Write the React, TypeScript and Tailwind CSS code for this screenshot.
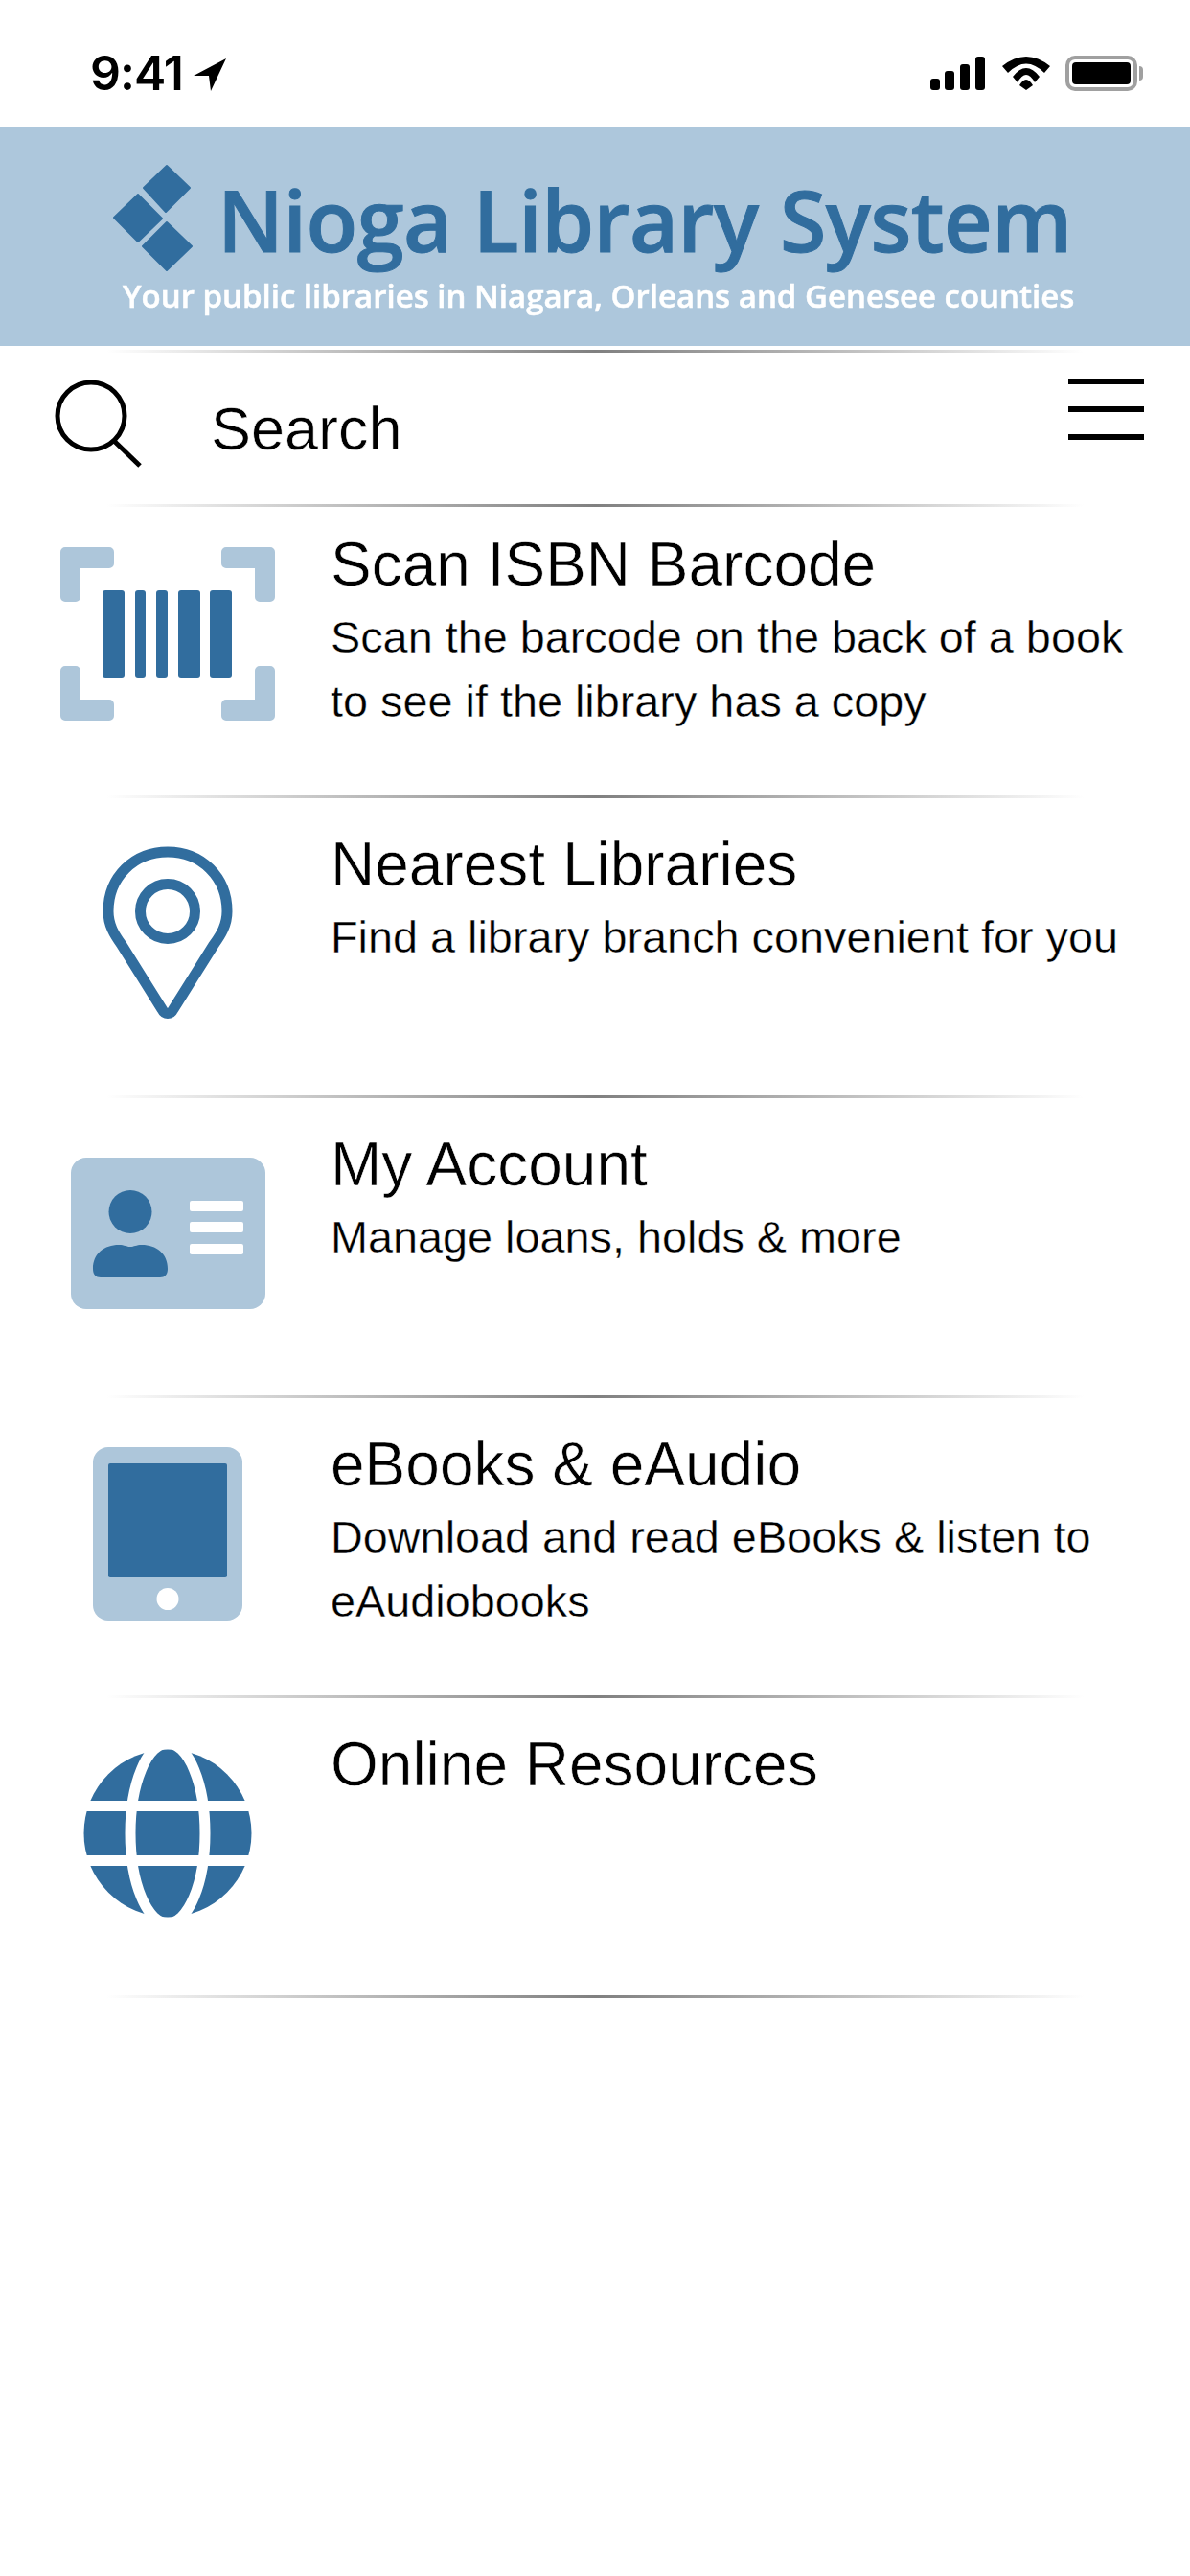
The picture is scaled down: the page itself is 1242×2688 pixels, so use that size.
const BLUE = '#316d9e'
const PALE = '#adc6da'

function Divider() {
  return <div className="mx-auto h-[3px] w-[1020px] bg-linear-to-r from-white via-[#808080] to-white" />
}

function StatusBar() {
  return (
    <div className="flex h-[132px] items-start justify-between pl-[94px] pr-[49px] pt-[49px]">
      <div className="flex items-center gap-[10px]">
        <span className="font-['Inter',sans-serif] text-[50px] font-semibold leading-[54px] tracking-[-1px] text-black">9:41</span>
        <svg width="36" height="36" viewBox="0 0 36 36" className="mt-[4px]">
          <path d="M35 1 L1 19 L17 19 L19 35 Z" fill="#000" />
        </svg>
      </div>
      <div className="flex items-center pt-[9px]">
        <svg width="57" height="35" viewBox="0 0 57 35">
          <rect x="0" y="23" width="10" height="12" rx="3" fill="#000" />
          <rect x="15" y="15" width="10" height="20" rx="3" fill="#000" />
          <rect x="31" y="8" width="10" height="27" rx="3" fill="#000" />
          <rect x="47" y="0" width="10" height="35" rx="3" fill="#000" />
        </svg>
        <svg width="50" height="35" viewBox="0 0 50 35" className="ml-[18px]">
          <path d="M0 10 Q25 -10 50 10 L44 17 Q25 -2 6 17 Z" fill="#000" />
          <path d="M11 21 Q25 3 39 21 L34 27 Q25 11 16 27 Z" fill="#000" />
          <path d="M18 30 Q25 18 32 30 L25 35 Z" fill="#000" />
        </svg>
        <div className="ml-[16px] flex items-center">
          <div className="flex h-[37px] w-[75px] items-center justify-center rounded-[10px] border-[4px] border-[#a0a0a0]">
            <div className="h-[23px] w-[61px] rounded-[4px] bg-black" />
          </div>
          <div className="ml-[2px] h-[15px] w-[4px] rounded-r-[4px] bg-[#a0a0a0]" />
        </div>
      </div>
    </div>
  )
}

function Banner() {
  return (
    <div className="flex h-[229px] flex-col bg-[#adc7dc] pl-[117px] pt-[39px]">
      <div className="flex items-start">
        <svg width="86" height="114" viewBox="117 171 86 114" className="shrink-0">
          <g fill={BLUE} stroke={BLUE} strokeWidth="2" strokeLinejoin="round">
            <path d="M174 173 L198 196 L173 221 L150 196 Z" />
            <path d="M144 203 L169 228 L144 252 L119 227 Z" />
            <path d="M174 232 L200 257 L174 282 L149 257 Z" />
          </g>
        </svg>
        <div className="ml-[24px] mt-[16px] whitespace-nowrap font-['Open_Sans',sans-serif] text-[88px] font-semibold leading-[84px] tracking-[-0.5px] text-[#316d9e] blur-[0.6px] [-webkit-text-stroke:1px_#316d9e]">
          Nioga Library System
        </div>
      </div>
      <div className="ml-[11px] mt-[2px] whitespace-nowrap font-['Open_Sans',sans-serif] text-[33px] font-semibold leading-[44px] text-white blur-[0.5px] [-webkit-text-stroke:0.5px_white]">
        Your public libraries in Niagara, Orleans and Genesee counties
      </div>
    </div>
  )
}

function SearchBar() {
  return (
    <div className="flex h-[158px] items-start pl-[57px] pr-[48px]">
      <svg width="92" height="92" viewBox="0 0 92 92" className="mt-[28px] shrink-0">
        <circle cx="38" cy="38" r="35" fill="none" stroke="#000" strokeWidth="5" />
        <path d="M62 64 L89 90" fill="none" stroke="#000" strokeWidth="5" />
      </svg>
      <span className="ml-[71px] mt-[42px] text-[63px] leading-[74px] text-black [-webkit-text-stroke:0.6px_white]">Search</span>
      <div className="ml-auto mt-[27px] flex w-[79px] flex-col gap-[23px]">
        <div className="h-[6px] bg-black" />
        <div className="h-[6px] bg-black" />
        <div className="h-[6px] bg-black" />
      </div>
    </div>
  )
}

function BarcodeIcon() {
  return (
    <svg width="224" height="181" viewBox="0 0 224 181">
      <path d="M5 0 H51 A5 5 0 0 1 56 5 V17 A5 5 0 0 1 51 22 H21 V52 A5 5 0 0 1 16 57 H5 A5 5 0 0 1 0 52 V5 A5 5 0 0 1 5 0 Z" fill={PALE} />
      <path d="M219 0 H173 A5 5 0 0 0 168 5 V17 A5 5 0 0 0 173 22 H203 V52 A5 5 0 0 0 208 57 H219 A5 5 0 0 0 224 52 V5 A5 5 0 0 0 219 0 Z" fill={PALE} />
      <path d="M5 181 H51 A5 5 0 0 0 56 176 V164 A5 5 0 0 0 51 159 H21 V129 A5 5 0 0 0 16 124 H5 A5 5 0 0 0 0 129 V176 A5 5 0 0 0 5 181 Z" fill={PALE} />
      <path d="M219 181 H173 A5 5 0 0 1 168 176 V164 A5 5 0 0 1 173 159 H203 V129 A5 5 0 0 1 208 124 H219 A5 5 0 0 1 224 129 V176 A5 5 0 0 1 219 181 Z" fill={PALE} />
      <rect x="44" y="45" width="23" height="91" rx="3" fill={BLUE} />
      <rect x="78" y="45" width="11" height="91" rx="3" fill={BLUE} />
      <rect x="100" y="45" width="12" height="91" rx="3" fill={BLUE} />
      <rect x="123" y="45" width="23" height="91" rx="3" fill={BLUE} />
      <rect x="156" y="45" width="23" height="91" rx="3" fill={BLUE} />
    </svg>
  )
}

function PinIcon() {
  return (
    <svg width="136" height="182" viewBox="0 0 136 182">
      <path d="M68 6 C33 6 6 32 6 68 C6 82 12 92 20 103 L62 170 C65 176 71 176 74 170 L116 103 C124 92 130 82 130 68 C130 32 103 6 68 6 Z" fill="none" stroke={BLUE} strokeWidth="11" strokeLinejoin="round" />
      <circle cx="68" cy="68" r="28.5" fill="none" stroke={BLUE} strokeWidth="11" />
    </svg>
  )
}

function CardIcon() {
  return (
    <svg width="203" height="158" viewBox="0 0 203 158">
      <rect x="0" y="0" width="203" height="158" rx="16" fill={PALE} />
      <circle cx="62" cy="56.5" r="22.5" fill={BLUE} />
      <path d="M23 116 C23 100 35 91 50 91 C56 91 58 93 62 93 C66 93 68 91 74 91 C89 91 101 100 101 116 C101 122 98 125 93 125 H31 C26 125 23 122 23 116 Z" fill={BLUE} />
      <rect x="124" y="45" width="56" height="11" rx="2" fill="#fff" />
      <rect x="124" y="67" width="56" height="11" rx="2" fill="#fff" />
      <rect x="124" y="90" width="56" height="11" rx="2" fill="#fff" />
    </svg>
  )
}

function TabletIcon() {
  return (
    <svg width="156" height="181" viewBox="0 0 156 181">
      <rect x="0" y="0" width="156" height="181" rx="16" fill={PALE} />
      <rect x="16" y="17" width="124" height="119" rx="2" fill={BLUE} />
      <circle cx="78" cy="158.5" r="11.5" fill="#fff" />
    </svg>
  )
}

function GlobeIcon() {
  return (
    <svg width="176" height="176" viewBox="0 0 176 176">
      <circle cx="88" cy="88" r="87.5" fill={BLUE} />
      <ellipse cx="88" cy="88" rx="39" ry="94" fill="none" stroke="#fff" strokeWidth="11" />
      <rect x="0" y="54" width="176" height="11" fill="#fff" />
      <rect x="0" y="111" width="176" height="11" fill="#fff" />
    </svg>
  )
}

const ROWS = [
  { icon: <BarcodeIcon />, title: 'Scan ISBN Barcode', text: 'Scan the barcode on the back of a book to see if the library has a copy' },
  { icon: <PinIcon />, title: 'Nearest Libraries', text: 'Find a library branch convenient for you' },
  { icon: <CardIcon />, title: 'My Account', text: 'Manage loans, holds & more' },
  { icon: <TabletIcon />, title: 'eBooks & eAudio', text: 'Download and read eBooks & listen to eAudiobooks' },
  { icon: <GlobeIcon />, title: 'Online Resources', text: '' },
]

export default function App() {
  return (
    <div className="min-h-[2688px] w-[1242px] overflow-hidden bg-white font-['Liberation_Sans',Arial,sans-serif]">
      <StatusBar />
      <Banner />
      <div className="pt-[4px]">
        <Divider />
      </div>
      <SearchBar />
      <Divider />
      <div className="-mt-[9px]">
        {ROWS.map((row) => (
          <div key={row.title}>
            <div className="flex h-[310px]">
              <div className="flex h-[282px] w-[345px] shrink-0 items-center justify-center pl-[5px]">{row.icon}</div>
              <div className="w-[860px] pt-[31px]">
                <div className="text-[64px] leading-[76px] text-black [-webkit-text-stroke:0.6px_white]">{row.title}</div>
                <div className="mt-[5px] text-[46.8px] leading-[67px] text-black [-webkit-text-stroke:0.4px_white]">{row.text}</div>
              </div>
            </div>
            <Divider />
          </div>
        ))}
      </div>
    </div>
  )
}
